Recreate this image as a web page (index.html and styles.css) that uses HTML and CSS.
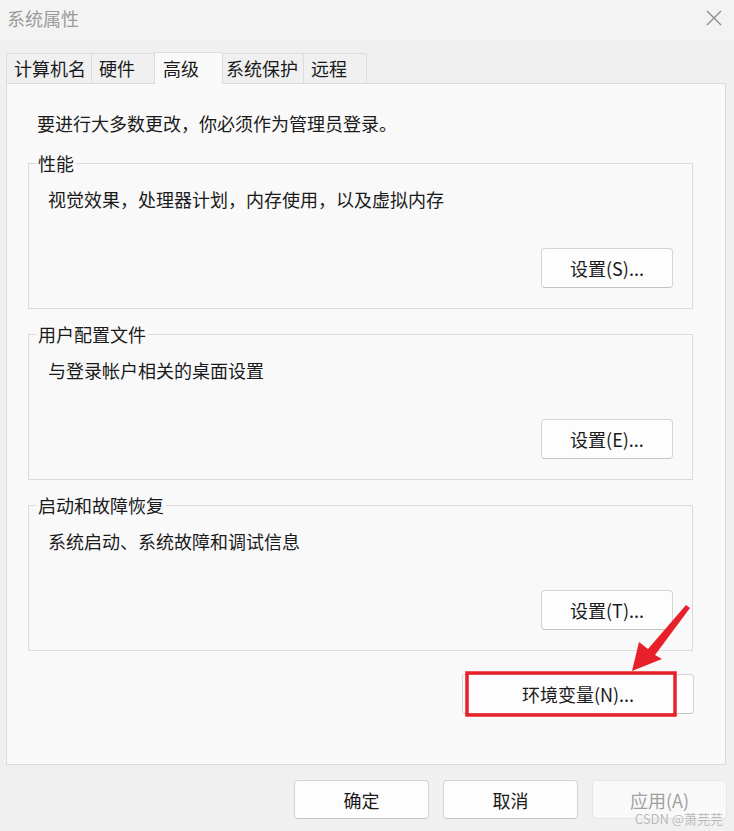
FILE: index.html
```html
<!doctype html>
<html>
  <head>
    <meta charset="utf-8">
    <title>系统属性</title>
    <link rel="stylesheet" href="styles.css">
  </head>
  <body>
    <div class="window">
      <div class="titlebar">
        <span class="title">系统属性</span>
        <svg class="close" width="16" height="16" viewBox="0 0 16 16">
          <path d="M1 1 L15 15 M15 1 L1 15" stroke="#8a8a8a" stroke-width="1.3" fill="none"/>
        </svg>
      </div>

      <div class="tabs">
        <div class="tab">计算机名</div>
        <div class="tab">硬件</div>
        <div class="tab active">高级</div>
        <div class="tab">系统保护</div>
        <div class="tab">远程</div>
      </div>

      <div class="panel">
        <p class="intro">要进行大多数更改，你必须作为管理员登录。</p>

        <fieldset class="group">
          <legend>性能</legend>
          <p class="desc">视觉效果，处理器计划，内存使用，以及虚拟内存</p>
          <div class="group-actions">
            <button class="btn">设置(S)...</button>
          </div>
        </fieldset>

        <fieldset class="group">
          <legend>用户配置文件</legend>
          <p class="desc">与登录帐户相关的桌面设置</p>
          <div class="group-actions">
            <button class="btn">设置(E)...</button>
          </div>
        </fieldset>

        <fieldset class="group">
          <legend>启动和故障恢复</legend>
          <p class="desc">系统启动、系统故障和调试信息</p>
          <div class="group-actions">
            <button class="btn">设置(T)...</button>
          </div>
        </fieldset>

        <div class="env-row">
          <button class="btn btn-env">环境变量(N)...</button>
        </div>
      </div>

      <div class="footer">
        <button class="btn btn-footer">确定</button>
        <button class="btn btn-footer">取消</button>
        <button class="btn btn-footer" disabled>应用(A)</button>
      </div>

      <!-- annotation drawn over the screenshot -->
      <svg class="annotation" width="734" height="831" viewBox="0 0 734 831">
        <rect x="467" y="673" width="208" height="42" fill="none" stroke="#e8202a" stroke-width="3.5"/>
        <polygon points="632,671 639,642 648,649 686,605 690,608 655,655 662,659" fill="#e8202a"/>
      </svg>
      <div class="watermark">CSDN @萧芫芫</div>
    </div>
  </body>
</html>
```

FILE: styles.css
```css
* {
  box-sizing: border-box;
}
body {
  margin: 0;
  background-color: #f0f0f0;
  font-family: "Noto Sans CJK SC", "Noto Sans", sans-serif;
  font-size: 18px;
  color: #1a1a1a;
}
.window {
  position: relative;
  width: 734px;
  height: 831px;
  overflow: hidden;
}
.titlebar {
  height: 40px;
  background-color: #f3f3f3;
  display: flex;
  align-items: center;
  justify-content: space-between;
  padding: 0 12px 4px 7px;
}
.title {
  color: #9b9b9b;
  font-size: 18px;
  line-height: 24px;
}
.close {
  display: block;
}
.tabs {
  display: flex;
  align-items: flex-end;
  height: 43px;
  padding-left: 6px;
}
.tab {
  height: 30px;
  min-width: 64px;
  padding: 0 5px 0 7px;
  line-height: 28px;
  border: 1px solid #dcdcdc;
  border-bottom: none;
  border-right: none;
  background-color: #f0f0f0;
  white-space: nowrap;
}
.tab:nth-child(4) {
  padding-left: 5px;
  min-width: 82px;
}
.tab:last-child {
  border-right: 1px solid #dcdcdc;
}
.tab.active {
  position: relative;
  z-index: 1;
  height: 32px;
  min-width: 69px;
  margin: 0 -2px -1px -1px;
  padding-left: 8px;
  border-right: 1px solid #dcdcdc;
  background-color: #f9f9f9;
  line-height: 30px;
}
.tab.active + .tab {
  border-left: none;
}
.panel {
  margin: 0 8px 0 6px;
  height: 682px;
  background-color: #f9f9f9;
  border: 1px solid #dadada;
  padding: 27px 32px 0 21px;
}
.intro {
  margin: 0 0 16px 9px;
  line-height: 24px;
}
.group {
  margin: 0 0 13px 0;
  padding: 0 19px 20px 19px;
  border: 1px solid #dcdcdc;
  min-width: 0;
}
.group legend {
  margin-left: -12px;
  padding: 0 2px;
  line-height: 24px;
}
.desc {
  margin: 12px 0 0 0;
  line-height: 24px;
}
.group-actions {
  display: flex;
  justify-content: flex-end;
  margin-top: 37px;
}
.btn {
  font-family: "Noto Sans CJK SC", "Noto Sans", sans-serif;
  font-size: 18px;
  color: #1a1a1a;
  background-color: #fdfdfd;
  border: 1px solid #d4d4d4;
  border-bottom-color: #c4c4c4;
  border-radius: 4px;
  height: 40px;
  width: 132px;
  padding: 0;
  line-height: 24px;
}
.env-row {
  display: flex;
  justify-content: flex-end;
  margin-top: 23px;
  margin-right: -1px;
}
.btn.btn-env {
  width: 232px;
}
.footer {
  display: flex;
  justify-content: flex-end;
  gap: 14px;
  padding: 15px 7px 0 0;
}
.btn.btn-footer {
  width: 135px;
  height: 39px;
}
.btn.btn-footer:disabled {
  color: #a0a0a0;
  background-color: #f9f9f9;
  border-color: #e6e6e6;
}
.annotation {
  position: absolute;
  left: 0;
  top: 0;
  pointer-events: none;
}
.watermark {
  position: absolute;
  right: 11px;
  bottom: 5px;
  font-size: 13px;
  line-height: 15px;
  color: #b8b8b8;
  text-shadow: 0 0 1px #ffffff;
}
```
